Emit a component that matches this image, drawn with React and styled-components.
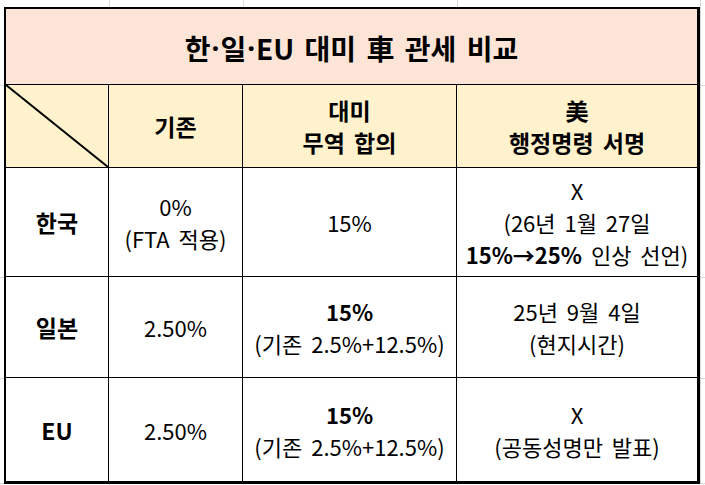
import styled, { createGlobalStyle } from 'styled-components';

const GlobalStyle = createGlobalStyle`
  html, body {
    margin: 0;
    padding: 0;
    background: #ffffff;
  }
  body {
    font-family: "Noto Sans CJK KR", "Noto Sans", sans-serif;
    color: #000;
  }
`;

// light spreadsheet gridlines that show around the table
const Sheet = styled.div`
  width: 705px;
  height: 485px;
  box-sizing: border-box;
  padding: 7px 0 0 4px;
  background-color: #fff;
  background-image:
    linear-gradient(#dadada, #dadada),
    linear-gradient(#dadada, #dadada),
    linear-gradient(#dadada, #dadada),
    linear-gradient(#dadada, #dadada),
    linear-gradient(#dadada, #dadada),
    linear-gradient(#dadada, #dadada),
    linear-gradient(#dadada, #dadada),
    linear-gradient(#dadada, #dadada);
  background-repeat: no-repeat;
  background-size: 1px 100%, 1px 100%, 1px 100%, 1px 100%, 100% 1px, 100% 1px, 100% 1px, 100% 1px;
  background-position: 109px 0, 243px 0, 457px 0, 700px 0, 0 85px, 0 277px, 0 378px, 0 483px;
`;

const Table = styled.div`
  display: grid;
  grid-template-columns: 103px 134px 214px 240px;
  grid-template-rows: 76px 83px 109px 101px 103px;
  width: 696px;
  box-sizing: border-box;
  border-style: solid;
  border-color: #000;
  border-width: 2px 3px 3px 2px;
  background: #fff;
`;

const Title = styled.div`
  grid-column: 1 / -1;
  display: flex;
  align-items: center;
  justify-content: center;
  background: #fce4d6;
  border-bottom: 1px solid #000;
  font-size: 28px;
  font-weight: 700;
  word-spacing: 4px;
  padding-top: 2px;
`;

const Dot = styled.span`
  font-family: "Noto Sans", sans-serif;
  margin: 0 1px;
`;

const Cell = styled.div`
  display: flex;
  flex-direction: column;
  align-items: center;
  justify-content: center;
  text-align: center;
  box-sizing: border-box;
  border-right: ${p => (p.$last ? 'none' : '1px solid #000')};
  border-bottom: ${p => (p.$bottom ? 'none' : '1px solid #000')};
  background: ${p => (p.$head ? '#fff2cc' : '#fff')};
  font-size: ${p => (p.$head || p.$label ? '23px' : '22px')};
  font-weight: ${p => (p.$head || p.$label ? 700 : 400)};
  word-spacing: 4px;
  line-height: 32px;
  white-space: nowrap;
  position: relative;
`;

const Diagonal = styled.svg`
  position: absolute;
  inset: 0;
  width: 100%;
  height: 100%;
`;

const Strong = styled.span`
  font-weight: 700;
`;

const rows = [
  {
    label: '한국',
    base: ['0%', '(FTA 적용)'],
    deal: [<span key="a">15%</span>],
    order: [
      <span key="a">X</span>,
      <span key="b">(26년 1월 27일</span>,
      <span key="c">
        <Strong>15%→25%</Strong> 인상 선언)
      </span>,
    ],
  },
  {
    label: '일본',
    base: ['2.50%'],
    deal: [<Strong key="a">15%</Strong>, <span key="b">(기존 2.5%+12.5%)</span>],
    order: [<span key="a">25년 9월 4일</span>, <span key="b">(현지시간)</span>],
  },
  {
    label: 'EU',
    base: ['2.50%'],
    deal: [<Strong key="a">15%</Strong>, <span key="b">(기존 2.5%+12.5%)</span>],
    order: [<span key="a">X</span>, <span key="b">(공동성명만 발표)</span>],
  },
];

const App = () => (
  <>
    <GlobalStyle />
    <Sheet>
      <Table>
        <Title>
          한<Dot>·</Dot>일<Dot>·</Dot>EU 대미 車 관세 비교
        </Title>

        <Cell $head>
          <Diagonal viewBox="0 0 100 100" preserveAspectRatio="none">
            <line x1="0" y1="0" x2="100" y2="100" stroke="#000" strokeWidth="2" vectorEffect="non-scaling-stroke" />
          </Diagonal>
        </Cell>
        <Cell $head>기존</Cell>
        <Cell $head>
          <span>대미</span>
          <span>무역 합의</span>
        </Cell>
        <Cell $head $last>
          <span>美</span>
          <span>행정명령 서명</span>
        </Cell>

        {rows.map((row, i) => {
          const bottom = i === rows.length - 1;
          return [
            <Cell key={`${row.label}-l`} $label $bottom={bottom}>
              {row.label}
            </Cell>,
            <Cell key={`${row.label}-b`} $bottom={bottom}>
              {row.base.map(t => (
                <span key={t}>{t}</span>
              ))}
            </Cell>,
            <Cell key={`${row.label}-d`} $bottom={bottom}>
              {row.deal}
            </Cell>,
            <Cell key={`${row.label}-o`} $bottom={bottom} $last>
              {row.order}
            </Cell>,
          ];
        })}
      </Table>
    </Sheet>
  </>
);

export default App;
